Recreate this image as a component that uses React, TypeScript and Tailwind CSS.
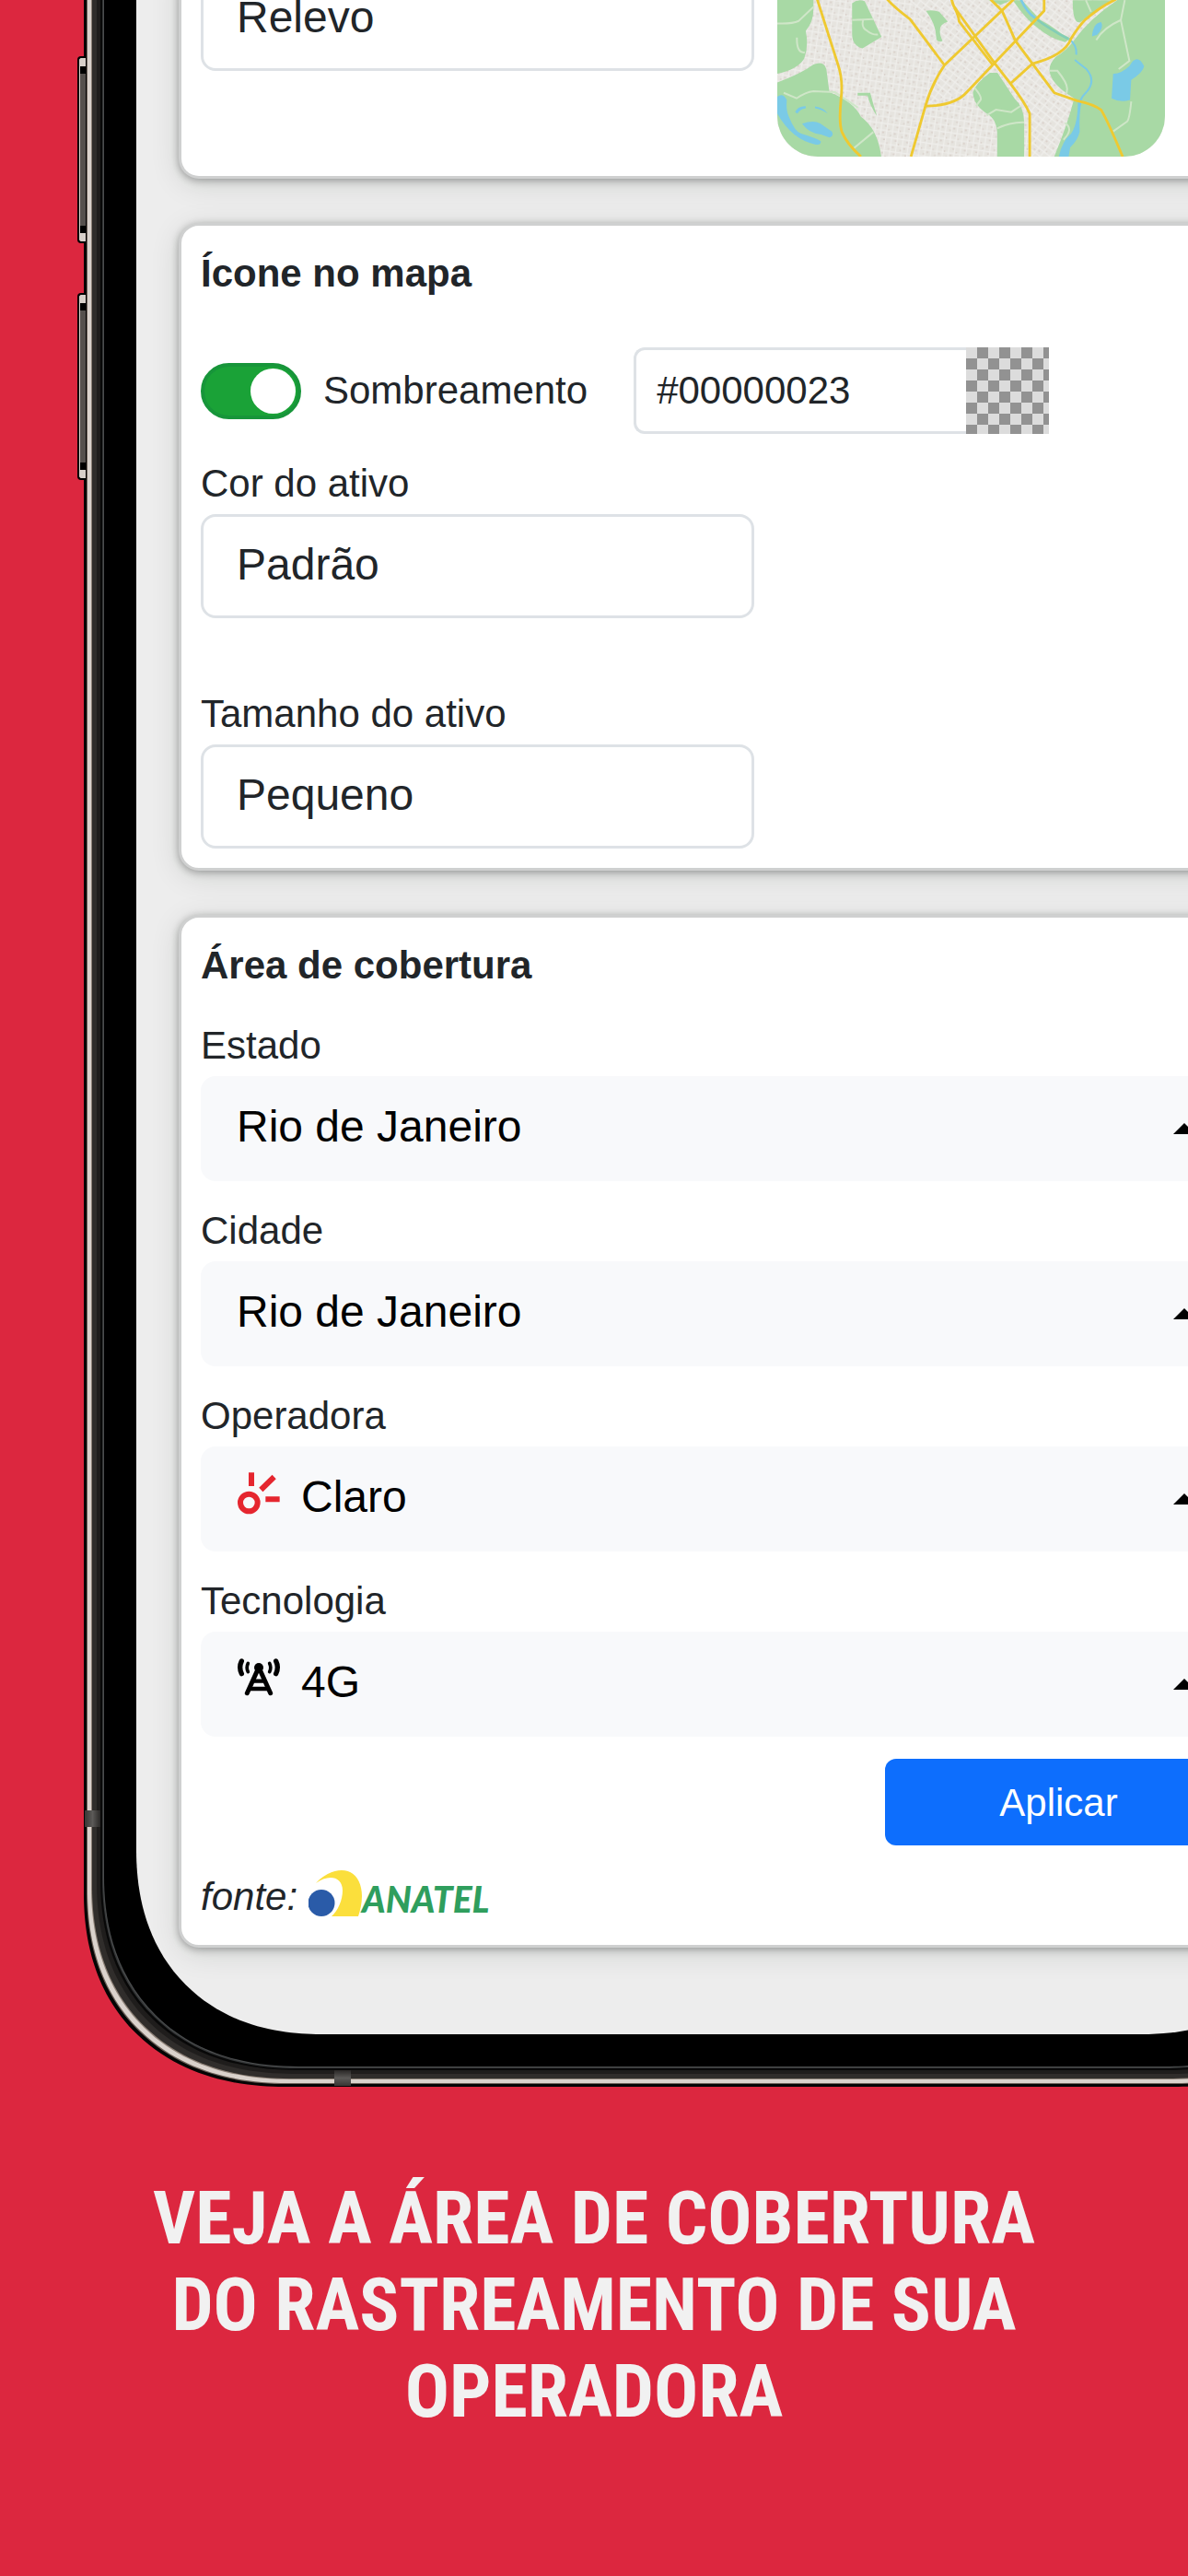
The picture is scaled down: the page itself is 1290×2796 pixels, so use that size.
import type { ReactNode } from "react";

const labelClass = "block text-[42px] leading-[66px] text-[#212529]";

function Card({ className = "", children }: { className?: string; children: ReactNode }) {
  return (
    <section
      className={`border-[3px] border-[#cfd0d0] bg-white px-[21px] pb-[21px] shadow-[0_2px_8px_rgba(0,0,0,0.32),0_6px_32px_rgba(10,30,20,0.12)] ${className}`}
    >
      {children}
    </section>
  );
}

function OutlineSelect({ id, value, label }: { id: string; value: string; label?: string }) {
  return (
    <select
      id={id}
      aria-label={label}
      defaultValue={value}
      className="block h-[113px] w-[601px] shrink-0 appearance-none rounded-2xl border-[3px] border-[#dee2e6] bg-white pb-1 pl-9 text-[48px] text-[#212529]"
    >
      <option>{value}</option>
    </select>
  );
}

function FilledSelect({ id, label, value, icon }: { id: string; label: string; value: string; icon?: ReactNode }) {
  return (
    <div>
      <label htmlFor={id} className={labelClass}>
        {label}
      </label>
      <div className="flex h-[114px] items-center rounded-2xl bg-[#f8f9fb] pr-[72px] pl-[39px]">
        {icon}
        <select
          id={id}
          defaultValue={value}
          className="h-full min-w-0 flex-1 appearance-none bg-transparent pb-1 text-[48px] text-black"
        >
          <option>{value}</option>
        </select>
        <svg viewBox="0 0 24 12" className="h-3 w-6 shrink-0" aria-hidden="true">
          <path d="M12 0 24 12H0Z" />
        </svg>
      </div>
    </div>
  );
}

function ClaroIcon() {
  return (
    <svg viewBox="201 170 138 138" className="mr-[22px] mb-3 h-[46px] w-12 shrink-0" aria-hidden="true">
      <g fill="none" stroke="#e5262f" strokeWidth="18">
        <circle cx="238" cy="269" r="28" />
        <path d="M246 171v44M277 227l43-42M292 258h46" />
      </g>
    </svg>
  );
}

function TowerIcon() {
  return (
    <svg viewBox="201 775 138 138" className="mr-[22px] mb-3 h-[46px] w-12 shrink-0" aria-hidden="true">
      <g fill="none" stroke="#000" strokeLinecap="round">
        <path strokeWidth="16" d="M214 787q-10 20 0 41M326 787q10 20 0 41" />
        <path strokeWidth="11" d="M235 794q-7 14 0 28M305 794q7 14 0 28" />
        <path strokeWidth="15" strokeLinejoin="round" d="M232 891l38-84 38 84" />
        <path strokeWidth="13" d="M254 852h32M243 877h54" />
      </g>
      <circle cx="270" cy="808" r="15" />
    </svg>
  );
}

function AnatelLogo() {
  return (
    <span className="mb-2 flex items-end">
      <svg viewBox="0 0 58 50" className="h-[50px] w-[58px]" aria-hidden="true">
        <path
          fill="#fbdf3c"
          d="M8 14C16 5 27 0 36 0C50 0 58 12 58 28C58 36 56 44 54 50H25C32 44 37 32 37 22C37 6 21 4 8 14Z"
        />
        <circle cx="14" cy="35.500" r="14.500" fill="#2a5ba8" />
      </svg>
      <span className="font-[Lato,sans-serif] text-[39px] leading-[38px] font-black text-[#2f9e5d] italic">ANATEL</span>
    </span>
  );
}

function CityMap() {
  return (
    <svg
      viewBox="72 -123 1264 633"
      preserveAspectRatio="xMidYMax slice"
      className="h-[206px] w-[421px] shrink-0 rounded-b-[44px]"
      role="img"
      aria-label="Mapa"
    >
      <defs>
        <pattern id="blocks" width="46" height="40" patternUnits="userSpaceOnUse" patternTransform="rotate(38)">
          <rect width="46" height="40" fill="#e6e4df" />
          <path d="M0 10h46M0 30h46M12 0v40M34 0v40" stroke="#efeeeb" strokeWidth="4" />
          <path d="M17 15h6v5h-6zM38 2h5v4h-5zM2 20h6v4h-6zM27 34h5v4h-5z" fill="#d9d0ca" />
        </pattern>
        <pattern id="blocks2" width="38" height="44" patternUnits="userSpaceOnUse" patternTransform="rotate(8)">
          <rect width="38" height="44" fill="#e6e4df" />
          <path d="M0 9h38M0 31h38M9 0v44M28 0v44" stroke="#efeeeb" strokeWidth="4" />
          <path d="M14 14h6v5h-6zM32 3h4v5h-4zM2 21h5v5h-5zM20 37h6v4h-6z" fill="#d9d0ca" />
        </pattern>
      </defs>
      <rect x="72" y="-123" width="1264" height="633" fill="url(#blocks)" />
      <path d="M200 -123H440L620 212 560 345 510 510H72V200ZM560 345L800 240 900 370V510H510Z" fill="url(#blocks2)" />
      <g fill="#a8d9a5">
        <path d="M72 -123H190V30Q190 70 165 100Q175 150 160 190Q140 225 72 240Z" />
        <path d="M72 268Q150 240 190 210Q225 195 232 225L242 300Q320 330 345 380Q400 420 411 510H72Z" />
        <path d="M316 10Q335 -5 357 3L412 120 350 157Q316 150 316 110Z" />
        <path d="M557 35Q575 30 600 38L628 70Q600 80 603 97Q600 110 611 133Q590 140 590 120Q590 80 557 35Z" />
        <path d="M334 302H375Q385 340 397 378Q375 345 366 311H334Z" />
        <path d="M765 237H790L845 320Q878 350 877 400V510H789V440Q790 390 755 370Q710 340 710 300Q720 270 765 237Z" />
        <path d="M760 0H835L800 15ZM840 0H870L930 65Q960 80 1000 110L1030 125 1010 137Q960 125 920 90Q880 60 840 0Z" />
        <path d="M1035 0H1160Q1100 45 1060 72Q1035 80 1035 0Z" />
        <path d="M1336 -123H1180V0Q1090 60 1040 130Q1020 160 980 185Q945 220 970 260Q990 290 1040 320Q1020 400 975 510H1336Z" />
      </g>
      <g fill="none" stroke="#cfe6c8" strokeWidth="6">
        <path d="M72 76Q120 78 142 68L190 22M136 122Q135 175 162 170M93 302L135 320Q165 300 190 297L260 300 335 350M322 482L385 430" />
        <path d="M316 65L386 62M352 65Q345 90 365 100Q385 115 400 112M755 375L785 357 835 365 865 345M789 418Q830 397 877 398M715 285Q740 315 735 325L720 345" />
        <path d="M1205 0L1192 65 1220 198 1185 225M1192 65Q1135 90 1112 130M1226 330Q1220 390 1212 396L1167 428M1078 0L1095 38M958 230H985Q1018 270 1017 290L1015 305M1010 400Q1040 420 1005 455" />
      </g>
      <g fill="#7acae6">
        <path d="M72 315Q90 300 103 325Q100 360 110 380Q130 430 150 435Q200 450 214 460Q215 475 195 470Q120 455 72 370Z" />
        <path d="M130 365Q140 345 165 346V352Q145 355 138 370ZM195 346Q225 350 237 370Q215 355 195 352Z" />
        <path d="M153 403Q190 390 212 402L250 428Q258 442 242 448L215 438Q175 435 153 403Z" />
        <path d="M1167 240Q1190 242 1220 215Q1245 170 1268 215Q1265 235 1226 260L1222 325Q1190 335 1162 320Z" />
        <path d="M1098 118Q1102 75 1128 72Q1138 90 1115 113Z" />
        <path d="M1052 325H1065Q1055 370 1058 430Q1050 460 1027 480L1022 510H990Q1000 460 1030 435Q1053 400 1052 325Z" />
      </g>
      <g fill="none" stroke="#7acae6" strokeWidth="8">
        <path d="M865 -5Q885 40 912 58" />
        <path d="M912 58Q960 95 1020 126" stroke="#83cdb7" />
        <path d="M1022 126Q1050 145 1047 178M1042 195Q1060 210 1080 225Q1115 265 1075 305Q1060 320 1058 340" strokeWidth="6" />
      </g>
      <g fill="none" stroke="#efc930" strokeWidth="8.500" strokeLinejoin="round">
        <path d="M160 -123L203 0 270 210Q287 260 280 320Q272 400 283 430Q300 470 345 510" />
        <path d="M345 -123L433 0Q455 25 505 62L617 212" />
        <path d="M960 -123L840 0 617 212Q575 275 555 345L508 510" />
        <path d="M555 345Q650 345 690 300L780 205 942 35V-123" />
        <path d="M610 -123L641 0Q645 20 658 35L780 205 832 272Q880 335 895 370V510" />
        <path d="M650 25Q663 50 665 70L775 212" />
        <path d="M680 -123L770 0 805 35Q830 90 848 132L904 207 975 302 1050 328Q1105 340 1128 358Q1150 395 1198 510" />
        <path d="M832 272L904 207Q1010 180 1030 125Q1055 85 1075 65Q1120 25 1170 0L1336 -90" />
      </g>
    </svg>
  );
}

/* One volume key on the edge of the phone body. */
function SideButton({ className }: { className: string }) {
  return (
    <div
      className={`absolute -left-16 flex h-[203px] w-[9px] flex-col justify-between rounded-l border-2 border-r-0 border-black bg-[#d8d0ca] py-[9px] pl-px ${className}`}
    >
      <div className="h-full border-y-8 border-black bg-[#55504d]" />
    </div>
  );
}

export default function App() {
  return (
    <main className="min-h-screen w-full overflow-hidden bg-[#dc273f] font-['Liberation_Sans',Arial,sans-serif]">
      <div className="relative -mt-9 -mr-[150px] ml-[148px]">
        <SideButton className="top-[97px]" />
        <SideButton className="top-[354px]" />
        <div className="flex flex-col gap-12 rounded-b-[200px] bg-[#ededed] pr-[46px] pb-[94px] pl-[46px] shadow-[0_0_0_35px_#000,0_0_0_36px_#4b4d4e,0_0_0_37px_#333536,0_0_0_39px_#080808,0_0_0_43px_#1f1d1c,0_0_0_48px_#302d2b,0_0_0_49px_#8d8177,0_0_0_53px_#dad2cc,0_0_0_54px_#6a5f57,0_0_0_57px_#050404] [corner-shape:superellipse(1.15)]">
          <Card className="rounded-b-[22px] border-t-0">
            <div className="flex gap-[25px]">
              <OutlineSelect id="relief" value="Relevo" label="Relevo" />
              <CityMap />
            </div>
          </Card>

          <Card className="rounded-[22px] pt-5">
            <h2 className="text-[42px] leading-[63px] font-bold text-[#212529]">Ícone no mapa</h2>
            <div className="mt-[49px] flex items-center">
              <input
                id="shading"
                type="checkbox"
                role="switch"
                defaultChecked
                className="flex h-[61px] w-[109px] appearance-none items-center rounded-full border-4 border-[#17953a] bg-[#1aa237] pl-[50px] before:block before:size-[49px] before:rounded-full before:bg-white"
              />
              <label htmlFor="shading" className="ml-6 text-[42px] leading-[66px] text-[#212529]">
                Sombreamento
              </label>
              <div className="ml-[50px] flex">
                <input
                  type="text"
                  aria-label="Cor do sombreamento"
                  defaultValue="#00000023"
                  className="h-[94px] w-[361px] rounded-l-xl border-[3px] border-r-0 border-[#dee2e6] pl-[22px] text-[42px] text-[#212529]"
                />
                <button
                  type="button"
                  aria-label="Escolher cor"
                  className="w-[90px] bg-[repeating-conic-gradient(#929292_0_25%,#dcdcdc_0_50%)] bg-[length:24px_24px]"
                />
              </div>
            </div>
            <div className="mt-[21px]">
              <label htmlFor="asset-color" className={labelClass}>
                Cor do ativo
              </label>
              <OutlineSelect id="asset-color" value="Padrão" />
            </div>
            <div className="mt-[71px]">
              <label htmlFor="asset-size" className={labelClass}>
                Tamanho do ativo
              </label>
              <OutlineSelect id="asset-size" value="Pequeno" />
            </div>
          </Card>

          <Card className="rounded-[22px] pt-5">
            <h2 className="text-[42px] leading-[63px] font-bold text-[#212529]">Área de cobertura</h2>
            <div className="mt-[23px] flex flex-col gap-[21px]">
              <FilledSelect id="state" label="Estado" value="Rio de Janeiro" />
              <FilledSelect id="city" label="Cidade" value="Rio de Janeiro" />
              <FilledSelect id="carrier" label="Operadora" value="Claro" icon={<ClaroIcon />} />
              <FilledSelect id="technology" label="Tecnologia" value="4G" icon={<TowerIcon />} />
            </div>
            <div className="mt-6 flex justify-end pr-8">
              <button
                type="button"
                className="h-[94px] w-[377px] rounded-xl bg-[#0d6efd] text-[42px] text-white"
              >
                Aplicar
              </button>
            </div>
            <div className="mt-6 flex items-center gap-3">
              <em className="text-[42px] leading-[63px] text-[#212529]">fonte:</em>
              <AnatelLogo />
            </div>
          </Card>
        </div>
        <div className="absolute bottom-[225px] -left-14 h-[18px] w-[17px] bg-linear-to-r from-[#383634] via-[#5c5a58] to-[#2a2827]" />
        <div className="absolute -bottom-14 left-[215px] h-[17px] w-[18px] bg-linear-to-t from-[#383634] via-[#5c5a58] to-[#2a2827]" />
      </div>

      <p className="px-8 pt-[153px] pb-[120px] text-center font-['Roboto_Condensed',Roboto,sans-serif] text-[80px] leading-[94px] font-bold text-[#f1f1f1]">
        <span className="block">VEJA A ÁREA DE COBERTURA</span>
        <span className="block">DO RASTREAMENTO DE SUA</span>
        <span className="block">OPERADORA</span>
      </p>
    </main>
  );
}
